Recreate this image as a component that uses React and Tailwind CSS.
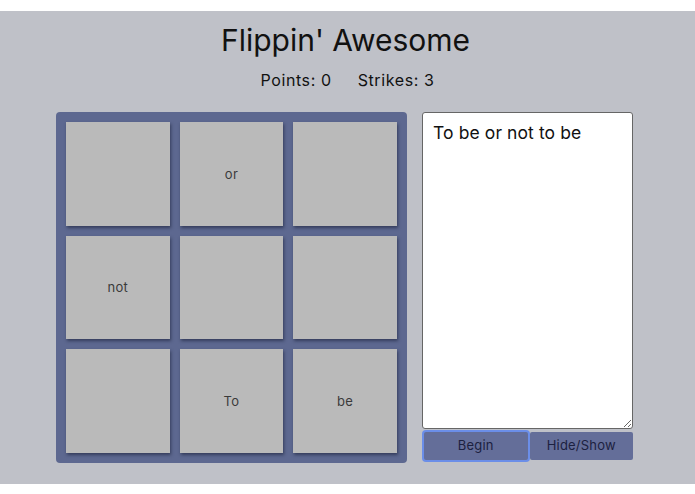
import React from "react";

const tiles = ["", "or", "", "not", "", "", "", "To", "be"];

export default function App() {
  return (
    <div className="w-[695px] h-[494px] bg-white" style={{ fontFamily: "Inter, 'Noto Sans', sans-serif" }}>
      <div className="mt-[11px] h-[473px] bg-[#bfc1c8] flex flex-col items-center">
        <h1 className="mt-[11px] ml-[-4px] text-[30px] leading-[36px] text-[#111]">Flippin' Awesome</h1>
        <div className="mt-[12px] flex gap-[26px] text-[16px] leading-[20px] text-[#111] tracking-[0.6px]">
          <span>Points: 0</span>
          <span>Strikes: 3</span>
        </div>
        <div className="mt-[22px] flex gap-[15px] ml-[-6px]">
          <div className="w-[351px] h-[351px] bg-[#5d6890] rounded-[4px] p-[10px] grid grid-cols-3 gap-[10px]">
            {tiles.map((t, i) => (
              <div
                key={i}
                className="bg-[#bababa] flex items-center justify-center pt-[1px] text-[13px] text-[#3a3a3a] tracking-[0.3px] shadow-[1px_2px_3px_rgba(20,25,50,0.55)]"
              >
                {t}
              </div>
            ))}
          </div>
          <div className="w-[211px] flex flex-col">
            <textarea
              defaultValue="To be or not to be"
              className="w-[211px] h-[317px] bg-white border border-[#666] rounded-[3px] px-[10px] pt-[8px] pb-[6px] text-[17.5px] leading-[24px] tracking-[0.1px] text-[#111] outline-none"
              style={{ fontFamily: "Inter, 'Noto Sans', sans-serif" }}
            />
            <div className="mt-[3px] flex gap-[2px] h-[28px]">
              <button className="ml-[2px] flex-1 bg-[#646e99] rounded-[2px] ring-2 ring-[#6b8ee8] text-[13px] text-[#1c2140] tracking-[0.2px]">
                Begin
              </button>
              <button className="flex-1 bg-[#646e99] rounded-[2px] text-[13px] text-[#1c2140] tracking-[0.2px]">
                Hide/Show
              </button>
            </div>
          </div>
        </div>
      </div>
    </div>
  );
}
